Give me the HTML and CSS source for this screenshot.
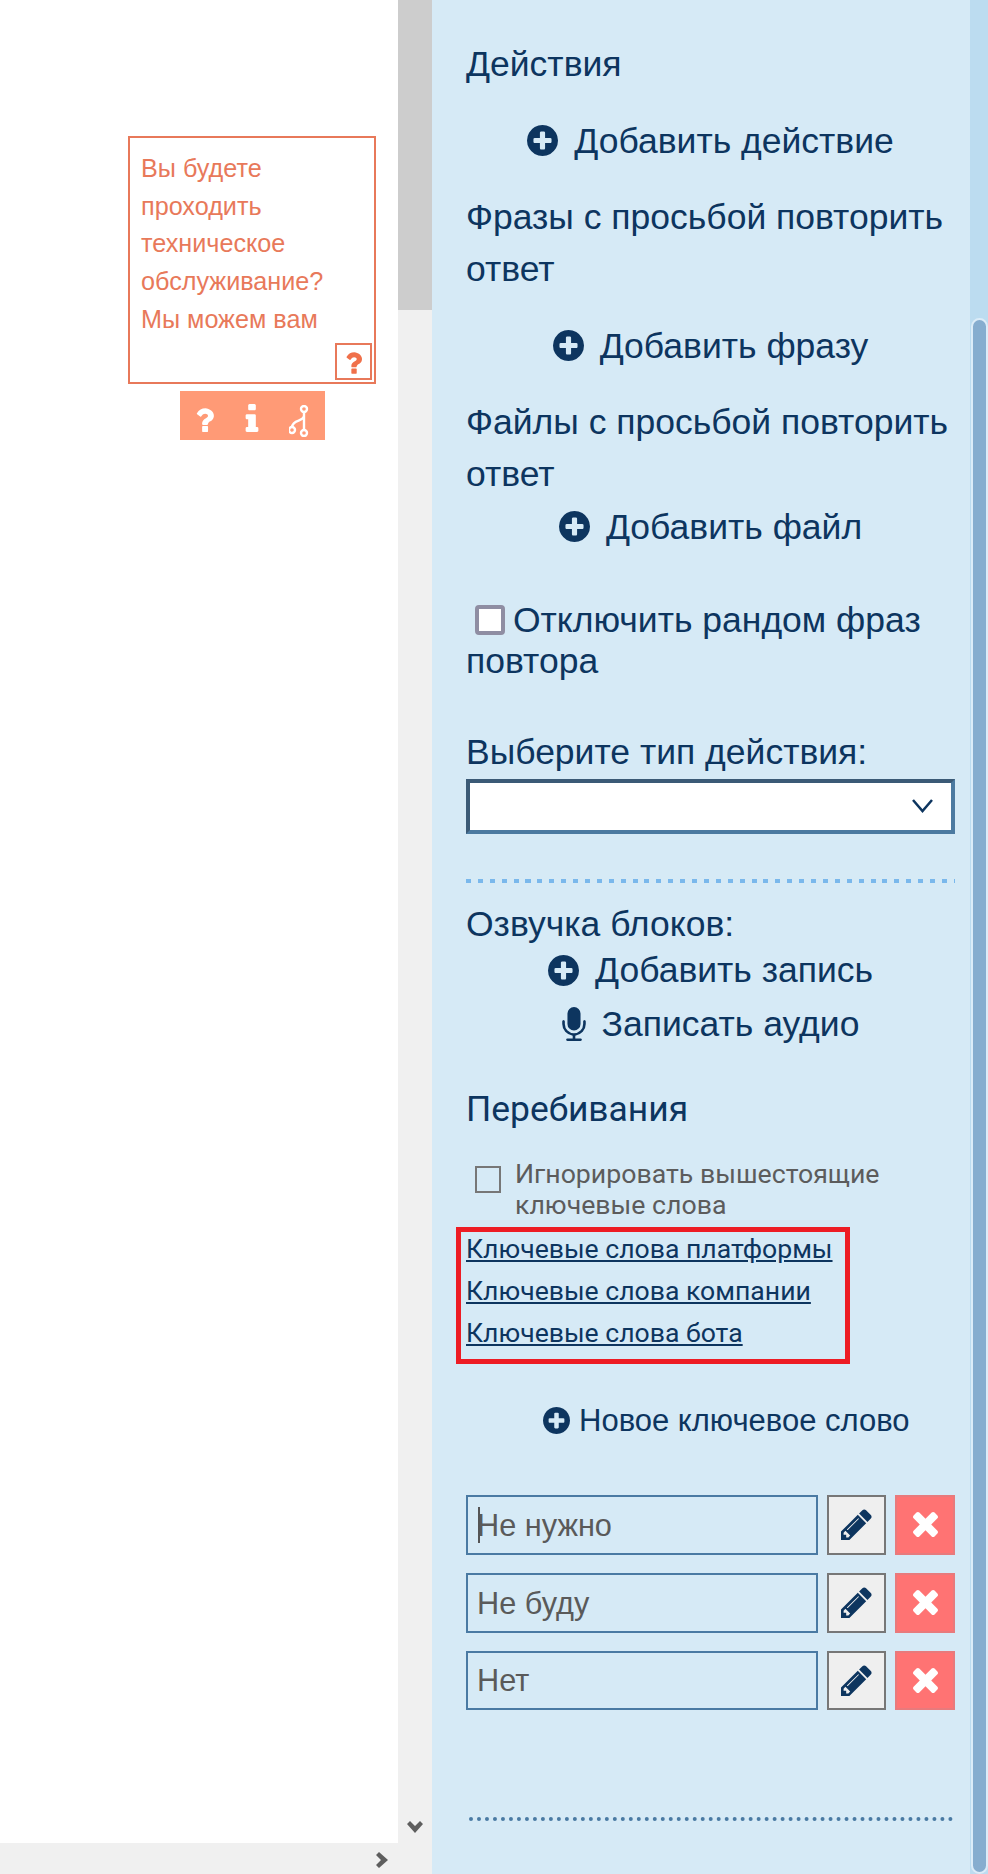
FILE: index.html
```html
<!DOCTYPE html>
<html lang="ru">
<head>
    <meta charset="UTF-8">
    <title>Перебивания</title>
    <link rel="stylesheet" href="styles.css">
</head>
<body>
    <svg class="defs" width="0" height="0">
        <symbol id="i-plus" viewBox="128 128 1536 1536"><path d="M1344 960v-128q0-26-19-45t-45-19h-256v-256q0-26-19-45t-45-19h-128q-26 0-45 19t-19 45v256h-256q-26 0-45 19t-19 45v128q0 26 19 45t45 19h256v256q0 26 19 45t45 19h128q26 0 45-19t19-45v-256h256q26 0 45-19t19-45zm320-64q0 209-103 385.500t-279.500 279.500-385.500 103-385.500-103-279.500-279.500-103-385.500 103-385.500 279.500-279.500 385.500-103 385.500 103 279.500 279.500 103 385.500z"/></symbol>
        <symbol id="i-mic" viewBox="320 0 1152 1664"><path d="M1472 704v128q0 221-147.500 384.500t-364.500 187.500v132h256q26 0 45 19t19 45-19 45-45 19h-640q-26 0-45-19t-19-45 19-45 45-19h256v-132q-217-24-364.500-187.500t-147.500-384.500v-128q0-26 19-45t45-19 45 19 19 45v128q0 185 131.500 316.500t316.500 131.500 316.500-131.500 131.500-316.500v-128q0-26 19-45t45-19 45 19 19 45zm-256-384v512q0 132-94 226t-226 94-226-94-94-226v-512q0-132 94-226t226-94 226 94 94 226z"/></symbol>
        <symbol id="i-pencil" viewBox="128 128 1536 1536"><path d="M491 1536l91-91-235-235-91 91v107h128v128h107zm523-928q0-22-22-22-10 0-17 7l-542 542q-7 7-7 17 0 22 22 22 10 0 17-7l542-542q7-7 7-17zm-54-192l416 416-832 832h-416v-416zm683 96q0 53-37 90l-166 166-416-416 165-166q36-38 90-38 53 0 91 38l235 234q37 39 37 91z"/></symbol>
        <symbol id="i-times" viewBox="302 366 1188 1188"><path d="M1490 1322q0 40-28 68l-136 136q-28 28-68 28t-68-28l-294-294-294 294q-28 28-68 28t-68-28l-136-136q-28-28-28-68t28-68l294-294-294-294q-28-28-28-68t28-68l136-136q28-28 68-28t68 28l294 294 294-294q28-28 68-28t68 28l136 136q28 28 28 68t-28 68l-294 294 294 294q28 28 28 68z"/></symbol>
        <symbol id="i-question" viewBox="388 128 1016 1408"><path d="M1088 1256v240q0 16-12 28t-28 12h-240q-16 0-28-12t-12-28v-240q0-16 12-28t28-12h240q16 0 28 12t12 28zm316-600q0 54-15.500 101t-35 76.500-55 59.500-57.500 43.500-61 35.500q-41 23-68.500 65t-27.500 67q0 17-12 32.500t-28 15.500h-240q-15 0-25.500-18.500t-10.500-37.500v-45q0-83 65-156.500t143-108.500q59-27 84-56t25-76q0-42-46.500-74t-107.500-32q-65 0-108 29-35 25-107 115-13 16-31 16-12 0-25-8l-164-125q-13-10-15.500-25t5.500-28q160-266 464-266 80 0 161 31t146 83 106 127.500 41 158.500z"/></symbol>
        <symbol id="i-info" viewBox="576 128 640 1408"><path d="M1216 1344v128q0 26-19 45t-45 19h-512q-26 0-45-19t-19-45v-128q0-26 19-45t45-19h64v-384h-64q-26 0-45-19t-19-45v-128q0-26 19-45t45-19h384q26 0 45 19t19 45v576h64q26 0 45 19t19 45zm-128-1152v192q0 26-19 45t-45 19h-256q-26 0-45-19t-19-45v-192q0-26 19-45t45-19h256q26 0 45 19t19 45z"/></symbol>
    </svg>

    <div class="page">
        <div class="canvas">
            <div class="node">
                <div class="node-card">
                    <p class="node-text">Вы будете проходить техническое обслуживание? Мы можем вам</p>
                    <span class="node-help"><svg class="ico-help"><use href="#i-question"/></svg></span>
                </div>
                <div class="node-tools">
                    <svg class="tool-q"><use href="#i-question"/></svg>
                    <svg class="tool-i"><use href="#i-info"/></svg>
                    <svg class="tool-b" viewBox="0 0 20 32" fill="none" stroke="#fff" stroke-width="2.4">
                        <circle cx="15" cy="4" r="3"/>
                        <circle cx="15" cy="28" r="3"/>
                        <circle cx="3" cy="25" r="3"/>
                        <path d="M15 7v18M15 11c-1 6-11 3-12 11"/>
                    </svg>
                </div>
            </div>
        </div>
        <div class="vbar">
            <div class="vbar-thumb"></div>
            <svg class="vbar-down" viewBox="0 0 16 13"><path d="M0 3l3-3 5 5 5-5 3 3-8 9z"/></svg>
        </div>
        <div class="hbar">
            <svg class="hbar-right" viewBox="0 0 13 16"><path d="M3 0l-3 3 5 5-5 5 3 3 9-8z"/></svg>
        </div>

        <div class="panel">
            <div class="panel-body">
                <div class="title t-actions">Действия</div>
                <div class="add-row r-action"><svg class="ico"><use href="#i-plus"/></svg>Добавить действие</div>
                <div class="title t-phrases">Фразы с просьбой повторить ответ</div>
                <div class="add-row r-phrase"><svg class="ico"><use href="#i-plus"/></svg>Добавить фразу</div>
                <div class="title t-files">Файлы с просьбой повторить ответ</div>
                <div class="add-row r-file"><svg class="ico"><use href="#i-plus"/></svg>Добавить файл</div>

                <div class="check-line"><span class="check-box"></span>Отключить рандом фраз повтора</div>

                <div class="check-line t-type">Выберите тип действия:</div>
                <div class="select">
                    <svg viewBox="0 0 21 14"><path d="M1 1l9.500 11L20 1"/></svg>
                </div>
                <div class="sep-dash"></div>

                <div class="check-line t-voice">Озвучка блоков:</div>
                <div class="add-row short r-record"><svg class="ico"><use href="#i-plus"/></svg>Добавить запись</div>
                <div class="add-row short r-audio"><svg class="ico-mic"><use href="#i-mic"/></svg>Записать аудио</div>

                <div class="interrupt-title">Перебивания</div>
                <div class="ignore">
                    <span class="ignore-box"></span>
                    <span class="ignore-text">Игнорировать вышестоящие ключевые слова</span>
                </div>
                <div class="kw-links">
                    <a href="#">Ключевые слова платформы</a>
                    <a href="#">Ключевые слова компании</a>
                    <a href="#">Ключевые слова бота</a>
                    <div class="red-mark"></div>
                </div>
                <div class="new-kw"><svg class="ico-sm"><use href="#i-plus"/></svg>Новое ключевое слово</div>

                <div class="kw-list">
                    <div class="kw-row">
                        <div class="kw-input"><span class="caret"></span>Не нужно</div>
                        <div class="btn-edit"><svg><use href="#i-pencil"/></svg></div>
                        <div class="btn-del"><svg><use href="#i-times"/></svg></div>
                    </div>
                    <div class="kw-row">
                        <div class="kw-input">Не буду</div>
                        <div class="btn-edit"><svg><use href="#i-pencil"/></svg></div>
                        <div class="btn-del"><svg><use href="#i-times"/></svg></div>
                    </div>
                    <div class="kw-row last">
                        <div class="kw-input">Нет</div>
                        <div class="btn-edit"><svg><use href="#i-pencil"/></svg></div>
                        <div class="btn-del"><svg><use href="#i-times"/></svg></div>
                    </div>
                </div>
                <div class="sep-dots"></div>
            </div>
            <div class="pbar"><div class="pbar-thumb"></div></div>
        </div>
    </div>
</body>
</html>
```

FILE: styles.css
```css
* {
    box-sizing: border-box;
}
html, body {
    margin: 0;
    padding: 0;
}
body {
    font-family: "Liberation Sans", Arial, sans-serif;
    color: #0d355f;
    background: #fff;
}
.defs {
    position: absolute;
}
.page {
    display: grid;
    grid-template-columns: 398px 34px 556px;
    grid-template-rows: 1843px 31px;
    height: 1874px;
    overflow: hidden;
}

/* left canvas */
.canvas {
    position: relative;
    background: #fff;
}
.node {
    position: absolute;
    left: 128px;
    top: 136px;
    width: 248px;
}
.node-card {
    position: relative;
    height: 248px;
    border: 2px solid #e8795a;
    padding: 12px 11px;
    overflow: hidden;
}
.node-text {
    margin: 0;
    font-size: 25.2px;
    line-height: 37.7px;
    color: #e8795a;
}
.node-help {
    position: absolute;
    right: 2px;
    bottom: 2px;
    width: 37px;
    height: 37px;
    border: 2px solid #e8795a;
    background: #fff;
    display: flex;
    align-items: center;
    justify-content: center;
}
.ico-help {
    width: 17px;
    height: 24px;
    fill: #f0704a;
}
.node-tools {
    position: relative;
    width: 145px;
    height: 49px;
    margin: 7px 0 0 52px;
    background: #ff9a76;
    fill: #fff;
}
.node-tools svg {
    position: absolute;
}
.tool-q {
    left: 15px;
    top: 15px;
    width: 19px;
    height: 26px;
}
.tool-i {
    left: 65px;
    top: 13px;
    width: 14px;
    height: 28px;
}
.tool-b {
    left: 109px;
    top: 14px;
    width: 20px;
    height: 32px;
    fill: none;
}

/* scrollbars */
.vbar {
    grid-column: 2;
    grid-row: 1 / 3;
    position: relative;
    background: #f0f0f0;
}
.vbar-thumb {
    height: 310px;
    background: #cdcdcd;
}
.vbar-down {
    position: absolute;
    left: 9px;
    top: 1821px;
    width: 16px;
    height: 13px;
    fill: #5e5e5e;
}
.hbar {
    grid-column: 1;
    grid-row: 2;
    position: relative;
    background: #f0f0f0;
}
.hbar-right {
    position: absolute;
    left: 376px;
    top: 9px;
    width: 13px;
    height: 16px;
    fill: #5e5e5e;
}

/* right panel */
.panel {
    grid-column: 3;
    grid-row: 1 / 3;
    display: flex;
    background: #d6eaf6;
}
.panel-body {
    width: 538px;
    padding: 38px 15px 0 34px;
}
.pbar {
    width: 18px;
    background: #bcdcf0;
}
.pbar-thumb {
    height: 1556px;
    margin: 318px 0 0 1px;
    background: #86adcf;
    border: 2px solid #dcecf8;
    border-radius: 9px;
}
.title {
    font-size: 35.5px;
    line-height: 52.5px;
}
.add-row {
    display: flex;
    align-items: center;
    justify-content: center;
    font-size: 35.5px;
    line-height: 52px;
    gap: 16px;
}
.ico {
    width: 31px;
    height: 31px;
    fill: #0d355f;
}
.ico-mic {
    width: 24px;
    height: 34px;
    fill: #0d355f;
}
.r-action, .t-phrases, .r-phrase, .t-files {
    margin-top: 24px;
}
.check-line {
    font-size: 35.5px;
    line-height: 41px;
    margin-top: 47px;
}
.check-box {
    display: inline-block;
    width: 30px;
    height: 30px;
    margin: 0 8px 0 9px;
    border: 4px solid #8f8ea3;
    border-radius: 4px;
    background: #fff;
    vertical-align: -3px;
}
.t-type {
    margin-top: 50px;
}
.select {
    display: flex;
    align-items: center;
    justify-content: flex-end;
    height: 55px;
    margin-top: 6px;
    padding-right: 18px;
    border: 4px solid #4c7aa0;
    border-top-color: #3b5a76;
    border-left-color: #3b5a76;
    background: #fff;
}
.select svg {
    width: 21px;
    height: 14px;
    fill: none;
    stroke: #0d355f;
    stroke-width: 2.5;
}
.sep-dash {
    height: 4px;
    margin-top: 45px;
    background: repeating-linear-gradient(90deg, #7ab8ec 0, #7ab8ec 5px, transparent 5px, transparent 11.9px);
}
.t-voice {
    margin-top: 21px;
}
.short {
    line-height: 41px;
}
.r-record {
    margin-top: 5px;
}
.r-audio {
    margin-top: 13px;
}
.interrupt-title {
    font-family: Roboto, sans-serif;
    font-size: 35.4px;
    line-height: 41px;
    margin-top: 44px;
}
.ignore {
    display: flex;
    margin-top: 29px;
    padding-left: 9px;
    gap: 14px;
    color: #5c5c5c;
    font-family: Roboto, sans-serif;
    font-size: 26.7px;
    line-height: 31px;
}
.ignore-box {
    flex: none;
    width: 26px;
    height: 27px;
    margin-top: 7px;
    border: 2px solid #777;
}
.kw-links {
    position: relative;
    margin-top: 7px;
    font-family: Roboto, sans-serif;
    font-size: 26.6px;
    line-height: 42px;
}
.kw-links a {
    display: block;
    color: #0d355f;
}
.red-mark {
    position: absolute;
    left: -10px;
    top: -1px;
    width: 394px;
    height: 137px;
    border: 5px solid #ed1c24;
}
.new-kw {
    display: flex;
    align-items: center;
    margin-top: 46px;
    padding-left: 77px;
    gap: 9px;
    font-size: 31px;
    line-height: 41px;
}
.ico-sm {
    width: 27px;
    height: 27px;
    fill: #0d355f;
}
.kw-list {
    margin-top: 54px;
}
.kw-row {
    display: flex;
    height: 60px;
    margin-bottom: 18px;
}
.kw-row.last {
    height: 59px;
    margin-bottom: 0;
}
.kw-input {
    position: relative;
    display: flex;
    align-items: center;
    width: 352px;
    padding: 2px 0 0 9px;
    border: 2px solid #4a7aa3;
    font-size: 30.7px;
    color: #5a5a5a;
}
.caret {
    position: absolute;
    left: 10px;
    top: 10px;
    width: 2px;
    height: 36px;
    background: #555;
}
.btn-edit, .btn-del {
    display: flex;
    align-items: center;
    justify-content: center;
}
.btn-edit {
    width: 59px;
    margin-left: 9px;
    border: 2px solid #777;
    background: #efefef;
}
.btn-edit svg {
    width: 31px;
    height: 31px;
    fill: #0d355f;
}
.btn-del {
    width: 60px;
    margin-left: 9px;
    border: 2px solid #e87a7c;
    background: #ff7373;
}
.btn-del svg {
    width: 25px;
    height: 25px;
    fill: #fff;
}
.sep-dots {
    margin: 107px 2px 0 3px;
    border-top: 4px dotted #4a7aa3;
}
```
